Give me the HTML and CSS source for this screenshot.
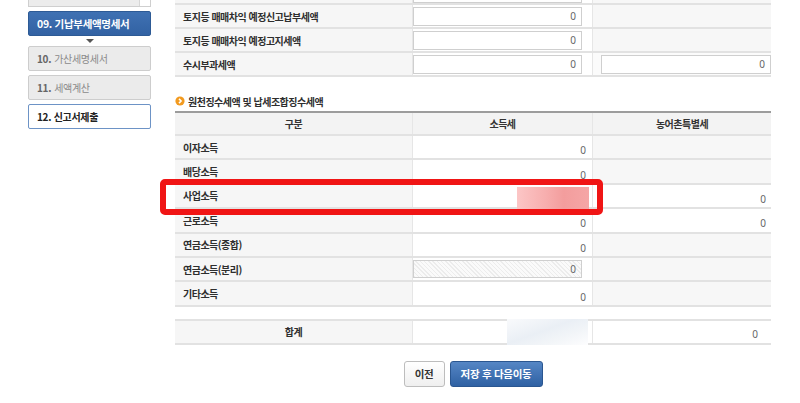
FILE: index.html
```html
<!DOCTYPE html>
<html lang="ko">
<head>
<meta charset="utf-8">
<title>원천징수세액</title>
<link rel="stylesheet" href="styles.css">
</head>
<body>
<div class="page">
  <aside class="side">
    <div class="prev"><span class="prev-main"></span><span class="prev-side"></span></div>
    <div class="step active">09. 기납부세액명세서</div>
    <div class="arrow"></div>
    <div class="step dim"><b>10.</b> 가산세명세서</div>
    <div class="step dim"><b>11.</b> 세액계산</div>
    <div class="step current">12. 신고서제출</div>
  </aside>

  <main class="main">
    <div class="tbl top">
      <div class="row r0">
        <div class="c lab"></div>
        <div class="c val"><span class="inp cut"></span></div>
        <div class="c ext grey"></div>
      </div>
      <div class="row">
        <div class="c lab">토지등 매매차익 예정신고납부세액</div>
        <div class="c val"><span class="inp">0</span></div>
        <div class="c ext grey"></div>
      </div>
      <div class="row">
        <div class="c lab">토지등 매매차익 예정고지세액</div>
        <div class="c val"><span class="inp">0</span></div>
        <div class="c ext grey"></div>
      </div>
      <div class="row">
        <div class="c lab">수시부과세액</div>
        <div class="c val"><span class="inp">0</span></div>
        <div class="c ext light"><span class="inp inp2">0</span></div>
      </div>
    </div>

    <h3 class="sec"><span class="ico"><svg viewBox="0 0 10 10" width="10" height="10"><circle cx="5" cy="5" r="4.6" fill="#f29a1f"/><path d="M4 2.9 L6.1 5 L4 7.1" fill="none" stroke="#fff" stroke-width="1.5"/></svg></span>원천징수세액 및 납세조합징수세액</h3>

    <div class="tbl wh">
      <div class="row head">
        <div class="c">구분</div>
        <div class="c">소득세</div>
        <div class="c">농어촌특별세</div>
      </div>
      <div class="row body">
        <div class="c lab">이자소득</div>
        <div class="c val num"><span>0</span></div>
        <div class="c ext grey"></div>
      </div>
      <div class="row body">
        <div class="c lab">배당소득</div>
        <div class="c val num"><span>0</span></div>
        <div class="c ext grey"></div>
      </div>
      <div class="row body">
        <div class="c lab">사업소득</div>
        <div class="c val num"></div>
        <div class="c ext num"><span>0</span></div>
      </div>
      <div class="row body">
        <div class="c lab">근로소득</div>
        <div class="c val num"><span>0</span></div>
        <div class="c ext num"><span>0</span></div>
      </div>
      <div class="row body">
        <div class="c lab">연금소득(종합)</div>
        <div class="c val num"><span>0</span></div>
        <div class="c ext grey"></div>
      </div>
      <div class="row body">
        <div class="c lab">연금소득(분리)</div>
        <div class="c val"><span class="inp hatch">0</span></div>
        <div class="c ext grey"></div>
      </div>
      <div class="row body">
        <div class="c lab">기타소득</div>
        <div class="c val num"><span>0</span></div>
        <div class="c ext grey"></div>
      </div>
      <div class="row total">
        <div class="c lab center">합계</div>
        <div class="c val"></div>
        <div class="c ext num sum"><span>0</span></div>
      </div>
    </div>

    <div class="btns">
      <button class="btn prevbtn">이전</button>
      <button class="btn next">저장 후 다음이동</button>
    </div>
  </main>

  <div class="mark"></div>
  <div class="blur-pink"></div>
  <div class="blur-sum"></div>
</div>
</body>
</html>
```

FILE: styles.css
```css
* { box-sizing: border-box; }
html, body { margin: 0; padding: 0; background: #fff; }
body {
  font-family: "Noto Sans CJK KR", "Noto Sans", sans-serif;
  color: #333;
  width: 800px;
  height: 403px;
  overflow: hidden;
}
.page {
  position: relative;
  display: flex;
  align-items: flex-start;
  width: 800px;
  height: 403px;
}

/* sidebar */
.side {
  width: 151px;
  padding-left: 28px;
  display: flex;
  flex-direction: column;
}
.prev {
  display: flex;
  height: 7px;
  border: 1px solid #cfcfcf;
  border-top: none;
  margin-bottom: 4px;
}
.prev-main { flex: 1; background: #ececec; border-right: 1px solid #d6d6d6; }
.prev-side { width: 10px; background: #fff; }
.step {
  height: 25px;
  border: 1px solid #cdcdcd;
  border-radius: 2px;
  padding-left: 8px;
  display: flex;
  align-items: center;
  font-size: 10px;
  letter-spacing: -0.3px;
  white-space: nowrap;
}
.step.active {
  background: linear-gradient(#3f71b3, #3262a3);
  border-color: #2d5a95;
  color: #fff;
  font-weight: bold;
  font-size: 10.5px;
}
.arrow {
  width: 0;
  height: 0;
  margin: 3px 0 3px 58px;
  border-left: 4px solid transparent;
  border-right: 4px solid transparent;
  border-top: 4px solid #555;
}
.step.dim {
  background: #ebebeb;
  color: #8a8a8a;
  margin-bottom: 4px;
}
.step.dim b { color: #666; margin-right: 3px; }
.step.current {
  background: #fff;
  border-color: #6d93c6;
  color: #222;
  font-weight: bold;
}

/* main */
.main {
  width: 596px;
  margin-left: 24px;
}
.tbl .row {
  display: grid;
  grid-template-columns: 237px 180px 179px;
  border-bottom: 2px solid #e2e2e2;
  height: 24px;
}
.tbl .row.r0 { height: 5px; }
.c {
  display: flex;
  align-items: center;
  min-width: 0;
}
.lab {
  background: #f6f6f6;
  padding-left: 8px;
  font-weight: bold;
  font-size: 10px;
  letter-spacing: -0.5px;
  color: #2e2e2e;
  white-space: nowrap;
}
.lab.center { justify-content: center; padding-left: 0; }
.val { background: #fff; border-left: 1px solid #e6e6e6; }
.ext { background: #fff; border-left: 1px solid #e6e6e6; }
.ext.grey { background: #f7f7f7; }
.ext.light { background: #fbfbfb; }

.inp {
  display: flex;
  align-items: center;
  justify-content: flex-end;
  width: 169px;
  height: 19px;
  margin-left: 0;
  border: 1px solid #cfcfcf;
  background: #fff;
  padding-right: 5px;
  font-family: "Noto Sans", sans-serif;
  font-size: 10px;
  color: #666;
}
.inp.cut { height: 3px; border-top: none; align-self: flex-start; }
.inp2 { margin-left: 8px; width: 170px; }
.inp.hatch {
  background: repeating-linear-gradient(45deg, #ececec 0 1px, #fafafa 1px 3px);
  height: 18px;
}

.sec {
  display: flex;
  align-items: center;
  height: 14px;
  margin: 17px 0 3px;
  font-size: 10px;
  letter-spacing: -0.5px;
  font-weight: bold;
  color: #2e2e2e;
}
.ico { display: flex; width: 10px; height: 10px; margin-right: 3px; }

.row.head {
  border-top: 2px solid #9c9c9c;
  background: #f3f3f3;
  height: 25px;
}
.row.head .c {
  justify-content: center;
  font-size: 10px;
  font-weight: bold;
  letter-spacing: -0.5px;
}
.row.head .c + .c { border-left: 1px solid #e6e6e6; }
.row.body { height: 24.4px; }
.num {
  justify-content: flex-end;
  padding-right: 6px;
  padding-top: 6px;
  font-family: "Noto Sans", sans-serif;
  font-size: 10px;
  color: #666;
}
.ext.num { padding-right: 5px; }
.row.total {
  margin-top: 12px;
  border-top: 2px solid #e2e2e2;
  height: 26px;
}
.ext.sum { padding-right: 13px; padding-top: 4px; }

.btns {
  display: flex;
  justify-content: center;
  gap: 5px;
  margin-top: 16px;
}
.btn {
  height: 26px;
  border-radius: 3px;
  font-family: "Noto Sans CJK KR", sans-serif;
  font-weight: bold;
  font-size: 10.5px;
  letter-spacing: -0.3px;
  padding: 0;
  cursor: pointer;
}
.prevbtn {
  width: 41px;
  background: linear-gradient(#ffffff, #efefef);
  border: 1px solid #bdbdbd;
  color: #333;
}
.next {
  width: 93px;
  background: linear-gradient(#5586c5, #2f61a3);
  border: 1px solid #2a5690;
  color: #fff;
}

/* overlays (annotation) */
.mark {
  position: absolute;
  left: 160px;
  top: 179px;
  width: 443px;
  height: 36px;
  border: 6px solid #f01515;
  border-radius: 5px;
}
.blur-pink {
  position: absolute;
  left: 517px;
  top: 187px;
  width: 72px;
  height: 22px;
  background: linear-gradient(90deg, #fcc6c6 0%, #f7aeae 40%, #f39d9d 65%, #f5a6a6 100%);
}
.blur-sum {
  position: absolute;
  left: 507px;
  top: 319px;
  width: 81px;
  height: 26px;
  background: linear-gradient(160deg, #f9fafc 0%, #eaeff5 45%, #f2f5f8 70%, #fdfdfe 100%);
}
```
